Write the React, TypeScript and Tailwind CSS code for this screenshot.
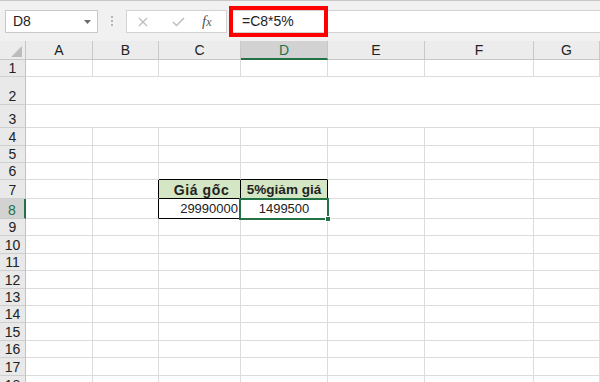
import React from "react";

const COLS = ["A", "B", "C", "D", "E", "F", "G"];
const GRID = "grid grid-cols-[26px_67px_66px_82px_87px_97px_109px_1fr]";
const HEIGHTS = [17, 28, 23, 18, 17, 17, 19, 20, 17, 18, 17, 18, 17, 17, 18, 17, 18, 18];
const hCls: Record<number, string> = {
  17: "h-[17px]",
  18: "h-[18px]",
  19: "h-[19px]",
  20: "h-[20px]",
  23: "h-[23px]",
  28: "h-[28px]",
};

function RowHeader({ n, selected }: { n: number; selected: boolean }) {
  return (
    <div
      className={
        "flex items-end justify-center border-b border-r text-[14px] leading-none pb-[1px] " +
        (selected
          ? "bg-[#d2d2d2] text-[#217346] border-b-[#c8c8c8] border-r-[2px] border-r-[#217346]"
          : "bg-[#e9e9e9] text-[#222] border-b-[#cfcfcf] border-r-[#c2c2c2]")
      }
    >
      {n}
    </div>
  );
}

function Cell({
  className = "",
  children,
}: {
  className?: string;
  children?: React.ReactNode;
}) {
  return (
    <div className={"border-b border-r leading-none flex items-center " + className}>
      {children}
    </div>
  );
}

function Row({ n }: { n: number }) {
  const h = hCls[HEIGHTS[n - 1]];
  if (n === 2 || n === 3) {
    return (
      <div className={GRID + " " + h}>
        <RowHeader n={n} selected={false} />
        <div className="col-span-7 border-b border-[#dcdcdc]" />
      </div>
    );
  }
  const cells: React.ReactNode[] = [];
  COLS.forEach((c) => {
    let cls = "border-[#dcdcdc]";
    let content: React.ReactNode = null;
    if ((n === 7 || n === 8) && c === "B") cls = "border-b-[#dcdcdc] border-r-[#000]";
    if (n === 6 && (c === "C" || c === "D")) cls = "border-r-[#dcdcdc] border-b-[#000]";
    if (n === 7 && c === "C") {
      cls = "border-[#000] bg-[#d5e6c4] justify-center font-bold text-[14px] pt-[1px]";
      content = <span className="tracking-[0.6px] ml-[4px]">Giá gốc</span>;
    }
    if (n === 7 && c === "D") {
      cls = "border-[#000] bg-[#d5e6c4] justify-center font-bold text-[13.5px] pt-[1px]";
      content = "5%giảm giá";
    }
    if (n === 8 && c === "C") {
      cls = "border-[#000] justify-end pr-[2px] text-[13px]";
      content = "29990000";
    }
    if (n === 8 && c === "D") {
      cls = "border-[#000] justify-center relative text-[13px]";
      content = (
        <>
          <span>1499500</span>
          <div className="absolute left-[-2px] top-[-1px] right-[-2px] bottom-[-2px] border-2 border-[#217346]" />
          <div className="absolute right-[-4px] bottom-[-4px] w-[6px] h-[6px] bg-[#217346] border border-white" />
        </>
      );
    }
    cells.push(
      <Cell key={c} className={cls}>
        {content}
      </Cell>
    );
  });
  return (
    <div className={GRID + " " + h}>
      <RowHeader n={n} selected={n === 8} />
      {cells}
    </div>
  );
}

export default function App() {
  return (
    <div
      className="w-[600px] h-[382px] overflow-hidden bg-white text-[#222]"
      style={{ fontFamily: '"Liberation Sans", Arial, sans-serif' }}
    >
      {/* Toolbar */}
      <div className="h-[41px] bg-[#f1f1f1] border-t border-[#c6c6c6] flex items-start pt-[9px]">
        <div className="ml-[5px] w-[93px] h-[23px] bg-white border border-[#c9c9c9] flex items-center justify-between pl-[7px] pr-[6px] text-[14px]">
          <span>D8</span>
          <svg width="7" height="4" viewBox="0 0 7 4">
            <path d="M0 0 L7 0 L3.5 4 Z" fill="#6b6b6b" />
          </svg>
        </div>
        <div className="ml-[13px] mt-[6px] flex flex-col gap-[2px]">
          <div className="w-[2px] h-[2px] bg-[#b5b5b5]" />
          <div className="w-[2px] h-[2px] bg-[#b5b5b5]" />
          <div className="w-[2px] h-[2px] bg-[#b5b5b5]" />
        </div>
        <div className="ml-[13px] w-[101px] h-[23px] bg-white border border-[#d2d2d2] flex items-center">
          <svg className="ml-[11px]" width="10" height="10" viewBox="0 0 10 10">
            <path d="M1 1 L9 9 M9 1 L1 9" stroke="#bdbdbd" strokeWidth="1.3" />
          </svg>
          <svg className="ml-[24px]" width="13" height="10" viewBox="0 0 13 10">
            <path d="M1 5 L4.5 8.5 L12 1" stroke="#bdbdbd" strokeWidth="1.5" fill="none" />
          </svg>
          <span
            className="ml-[17px] text-[15px] italic text-[#555]"
            style={{ fontFamily: '"Liberation Serif", serif' }}
          >
            f<span className="text-[12px]">x</span>
          </span>
        </div>
        <div className="ml-[2px] flex-1 h-[23px] bg-white border-y border-[#d2d2d2] relative flex items-center">
          <span className="ml-[13px] text-[14px] text-[#222]">=C8*5%</span>
          <div className="absolute left-0 top-[-5px] w-[99px] h-[31px] border-[4px] border-[#ff0000]" />
        </div>
      </div>
      {/* Column headers */}
      <div className={GRID + " h-[19px] bg-[#ececec] border-b border-[#c6c6c6]"}>
        <div className="border-r border-[#c6c6c6] relative">
          <svg className="absolute right-[3px] bottom-[2px]" width="11" height="11" viewBox="0 0 11 11">
            <path d="M11 0 L11 11 L0 11 Z" fill="#bcbcbc" />
          </svg>
        </div>
        {COLS.map((c) =>
          c === "D" ? (
            <div
              key={c}
              className="bg-[#d2d2d2] text-[#217346] border-r border-[#c6c6c6] border-b-2 border-b-[#217346] flex items-center justify-center text-[14px] leading-none mb-[-1px]"
            >
              {c}
            </div>
          ) : (
            <div
              key={c}
              className="border-r border-[#c8c8c8] flex items-center justify-center text-[14px] leading-none text-[#222]"
            >
              {c}
            </div>
          )
        )}
      </div>
      {HEIGHTS.map((_, i) => (
        <Row key={i} n={i + 1} />
      ))}
    </div>
  );
}
